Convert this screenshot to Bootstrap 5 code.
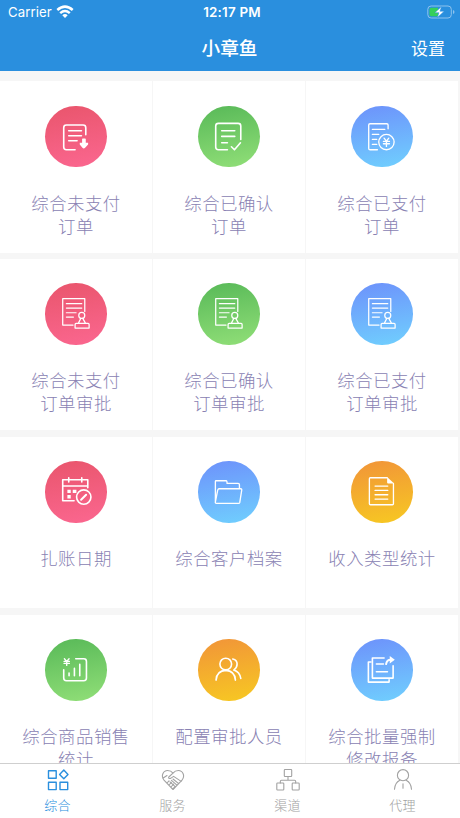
<!DOCTYPE html>
<html lang="zh-CN">
<head>
<meta charset="utf-8">
<meta name="viewport" content="width=device-width, initial-scale=1">
<title>小章鱼</title>
<link href="https://cdn.jsdelivr.net/npm/bootstrap@5.3.0/dist/css/bootstrap.min.css" rel="stylesheet">
<style>
body{font-family:"Noto Sans CJK SC",sans-serif;background:#f6f6f6}
.app-top{height:71px;background:#2a8fde}
.status{height:24px;font:13.2px/24px Inter,sans-serif;padding:0 6px 0 8px;letter-spacing:.1px}
.status .clock{font-size:13.4px;letter-spacing:.2px}
.title-row{height:46px;padding:0 15px 0 14px}
.title-row h1{font-size:18.7px;line-height:44px;font-weight:500}
.title-row a{font-size:17px;line-height:45px}
.status>*,.title-row>*{flex:1 1 0}
.status .power{margin-right:-2px}
.tiles{display:grid;grid-template-columns:repeat(3,152px);grid-auto-rows:171.5px;gap:6.4px 1px;padding-top:10px;background:#f6f6f6}
.tile{background:#fff;padding-top:24.5px;color:#8982b3;font-size:17.4px;font-weight:300;letter-spacing:.5px;line-height:23px;text-decoration:none}
.disc{width:61.5px;height:61.5px;margin-bottom:23.5px}
.disc svg{width:100%;height:100%;display:block}
.red{background:linear-gradient(170deg,#e9556c,#fb6790)}
.green{background:linear-gradient(170deg,#58b958,#91df78)}
.blue{background:linear-gradient(170deg,#6d91fb,#70d0fe)}
.orange{background:linear-gradient(170deg,#f19439,#f7c922)}
.line{fill:none;stroke:#fff;stroke-width:4;stroke-linecap:round;stroke-linejoin:round}
.fine{stroke-width:3.7}
.bold{stroke-width:4.8}
.solid{fill:#fff;stroke:none}
.tabs{height:55px;border-top:1px solid #cfcfcf;background:#fff}
.tabs a{color:#a2a2a2;font-size:13px;line-height:18px;letter-spacing:.3px;font-weight:300;padding-top:4px;text-decoration:none}
.tabs a.current{color:#2a8fde}
.tabs svg{width:24px;height:24px;margin-bottom:4px;fill:none;stroke:currentColor;stroke-width:1.1;stroke-linejoin:round;stroke-linecap:round}
.tabs .current svg{stroke-width:1.4}
</style>
<script src="https://cdn.jsdelivr.net/npm/bootstrap@5.3.0/dist/js/bootstrap.bundle.min.js"></script>
</head>
<body>
<svg class="d-none"><defs>
<g id="approval"><path d="M119 85V47H53v79h31M64 62h46M64 75h46M64 89h29M64 102h21"/><circle cx="110" cy="97" r="9"/><path d="m107 106-7 14m13-14 8 14M93 121h36q3 0 3 3v11H90v-11q0-3 3-3z"/></g>
</defs></svg>
<div class="vh-100 d-flex flex-column overflow-hidden">
<header class="app-top text-white flex-shrink-0">
  <div class="status d-flex align-items-center">
    <div class="d-flex align-items-center gap-1"><span>Carrier</span>
      <svg width="18" height="14" viewBox="0 0 18 14" fill="none" stroke="#fff" stroke-width="2.5"><path d="M1.3 5Q9-1.8 16.7 5M4.2 8.1Q9 3.9 13.8 8.1"/><path d="M6.3 10.2Q9 8 11.7 10.2L9 13z" fill="#fff" stroke="none"/></svg></div>
    <div class="clock text-center fw-semibold text-nowrap">12:17 PM</div>
    <div class="power d-flex justify-content-end">
      <svg width="29" height="14" viewBox="0 0 29 14"><rect x=".8" y="1" width="23.5" height="12" rx="3.3" fill="none" stroke="#8ec3ed"/><path d="M4.2 2.7H11v8.6H4.2Q2.5 11.3 2.5 9.5v-5Q2.5 2.7 4.2 2.7z" fill="#35cf5b"/><path d="M14.5 1.6 7.8 7.7h4.1l-1.5 4.9 6.8-6.4H13z" fill="#fff" stroke="#2a8fde" stroke-width=".5"/><path d="M26 5v4q1.5-.6 1.5-2T26 5z" fill="#8ec3ed"/></svg></div>
  </div>
  <div class="title-row d-flex align-items-center"><span></span><h1 class="m-0 text-center">小章鱼</h1><a class="text-white text-decoration-none text-end">设置</a></div>
</header>
<main class="tiles flex-grow-1 overflow-hidden align-content-start">
  <a class="tile d-flex flex-column align-items-center text-center"><span class="disc red rounded-circle"><svg viewBox="0 0 184 184"><g class="line bold"><path d="M90 131H64q-8 0-8-8V65q0-8 8-8h50q8 0 8 8v21M71 74h38M71 89h38M71 104h25"/></g><path class="solid" d="M113 97h7q2 0 2 2v11h7v5l-9 10q-4 4-8 0l-8-10v-5h7V99q0-2 2-2z"/></svg></span><span>综合未支付<br>订单</span></a>
  <a class="tile d-flex flex-column align-items-center text-center"><span class="disc green rounded-circle"><svg viewBox="0 0 184 184"><g class="line bold"><path d="M88 131H61q-8 0-8-8V60q0-8 8-8h59q8 0 8 8v40M71 74h39M71 91h39M71 110h17M100 122l9 9 18-21"/></g></svg></span><span>综合已确认<br>订单</span></a>
  <a class="tile d-flex flex-column align-items-center text-center"><span class="disc blue rounded-circle"><svg viewBox="0 0 184 184"><g class="line"><path d="M79 131H57q-4 0-4-4V57q0-4 4-4h50q4 0 4 4v11M64 70h37M64 85h19M64 100h13M64 115h13"/><circle cx="106" cy="108" r="23"/><path d="m99 96 7 9 7-9M97 106h18M97 113h18M106 105v16"/></g></svg></span><span>综合已支付<br>订单</span></a>
  <a class="tile d-flex flex-column align-items-center text-center"><span class="disc red rounded-circle"><svg viewBox="0 0 184 184"><use href="#approval" class="line fine"/></svg></span><span>综合未支付<br>订单审批</span></a>
  <a class="tile d-flex flex-column align-items-center text-center"><span class="disc green rounded-circle"><svg viewBox="0 0 184 184"><use href="#approval" class="line fine"/></svg></span><span>综合已确认<br>订单审批</span></a>
  <a class="tile d-flex flex-column align-items-center text-center"><span class="disc blue rounded-circle"><svg viewBox="0 0 184 184"><use href="#approval" class="line fine"/></svg></span><span>综合已支付<br>订单审批</span></a>
  <a class="tile d-flex flex-column align-items-center text-center"><span class="disc red rounded-circle"><svg viewBox="0 0 184 184"><g class="line bold"><path d="M87 119H53V56h75v24M53 75h75M71 50v13M110 50v13"/><circle cx="116" cy="108" r="21.5"/><path d="m108 116 15-15" stroke-width="6"/></g><path class="solid" d="M67 86h10v10H67zM83 86h11v10H83zM67 102h10v10H67z"/></svg></span><span>扎账日期</span></a>
  <a class="tile d-flex flex-column align-items-center text-center"><span class="disc blue rounded-circle"><svg viewBox="0 0 184 184"><g class="line"><path d="M52 124V61q0-2 2-2h30q3 0 3 8h33q4 0 4 4v9M63 83h65q3 0 3 3l-6 38q-1 3-4 3H55q-4 0-3-5l7-35q1-4 4-4z"/></g></svg></span><span>综合客户档案</span></a>
  <a class="tile d-flex flex-column align-items-center text-center"><span class="disc orange rounded-circle"><svg viewBox="0 0 184 184"><g class="line"><path d="M108 50H58q-3 0-3 3v75q0 3 3 3h66q3 0 3-3V67M72 75h38M72 88h38M72 101h38M72 114h38"/></g><path class="solid" d="M108 48l21 19h-18q-3 0-3-3z"/></svg></span><span>收入类型统计</span></a>
  <a class="tile d-flex flex-column align-items-center text-center"><span class="disc green rounded-circle"><svg viewBox="0 0 184 184"><g class="line bold"><path d="M92 59h24q8 0 8 8v50q0 8-8 8H64q-8 0-8-8V92M72 102v8M88 88v22M104 76v34"/><path d="m58 59 7 8 7-8M57 67h16M57 73h16M65 67v12" stroke-width="4"/></g></svg></span><span>综合商品销售<br>统计</span></a>
  <a class="tile d-flex flex-column align-items-center text-center"><span class="disc orange rounded-circle"><svg viewBox="0 0 184 184"><g class="line bold"><circle cx="83" cy="75" r="17.5"/><path d="M54 123Q56 95 83 94q27 1 29 29M104 60q13 3 13 15 0 11-10 18 18 6 21 25"/></g></svg></span><span>配置审批人员</span></a>
  <a class="tile d-flex flex-column align-items-center text-center"><span class="disc blue rounded-circle"><svg viewBox="0 0 184 184"><g class="line bold"><path d="M99 57H64v60h62V80M59 69h-7v60h62v-7M76 75h21M76 98h33"/><path d="M105 75q2-13 14-13" stroke-width="6"/></g><path class="solid" d="m116 51 15 11-15 11z"/></svg></span><span>综合批量强制<br>修改报备</span></a>
</main>
<nav class="tabs d-flex flex-shrink-0">
  <a class="current d-flex flex-column align-items-center col-3"><svg viewBox="0 0 24 24"><path d="M2.5 2.8h7.7v7.4H2.5zM2.5 14.2h7.7v7.4H2.5zM14 14.2h7.7v7.4H14zM17.8 2l4.2 4.4-4.2 4.4-4.2-4.4z"/></svg><span>综合</span></a>
  <a class="d-flex flex-column align-items-center col-3"><svg viewBox="0 0 24 24"><path d="M12 21.5 3 12.2C-.5 7.8 2.3 2.5 6.6 2.5Q10 2.5 12 5.2q2-2.7 5.4-2.7c4.3 0 7.1 5.3 3.6 9.7zM12 5.2 7.8 9q-.7 2 1.8 1.4l3-2 7.6 5M1.8 10.2 6 7.5M6 15l2-2.2M8 17l2.4-2.6M10 19l2.6-2.8M12.3 20.5l2-2M12 11l5.7 4.7M10.5 12.4l5.4 4.8M9 13.8l5.2 4.9"/></svg><span>服务</span></a>
  <a class="d-flex flex-column align-items-center col-3"><svg viewBox="0 0 24 24"><path d="M9 1.5h6q.7 0 .7.7v5.6q0 .7-.7.7H9q-.7 0-.7-.7V2.2q0-.7.7-.7zM12 8.5v3.8M4.3 15v-1.5q0-1.2 1.2-1.2h13q1.2 0 1.2 1.2V15"/><rect x=".8" y="15" width="7" height="7" rx=".8"/><rect x="16.2" y="15" width="7" height="7" rx=".8"/></svg><span>渠道</span></a>
  <a class="d-flex flex-column align-items-center col-3"><svg viewBox="0 0 24 24"><circle cx="12" cy="7.2" r="5.6"/><path d="M3.5 21.3q.4-6.5 5.3-9M20.5 21.3q-.4-6.5-5.3-9M12 15.8v4.4"/></svg><span>代理</span></a>
</nav>
</div>
</body>
</html>
